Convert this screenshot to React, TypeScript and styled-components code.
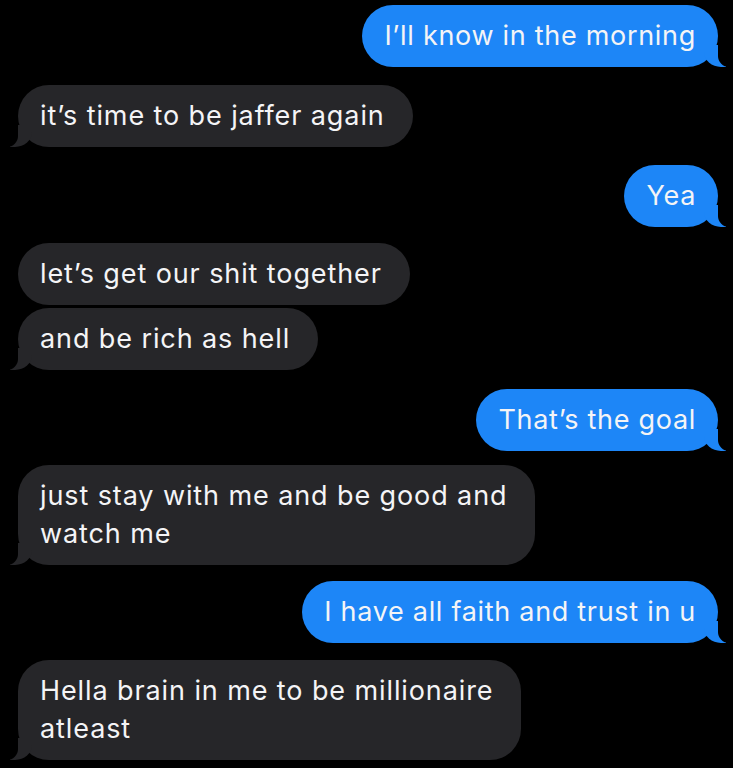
import React from 'react';
import styled, { createGlobalStyle, css } from 'styled-components';

const GlobalStyle = createGlobalStyle`
  html, body {
    margin: 0;
    padding: 0;
    background: #000;
  }
  body {
    font-family: Inter, "Liberation Sans", Arial, sans-serif;
    -webkit-font-smoothing: antialiased;
  }
`;

const Thread = styled.div`
  display: flex;
  flex-direction: column;
  padding: 5px 15px 0 18px;
  height: 768px;
  box-sizing: border-box;
  overflow: hidden;
  background: #000;
`;

type Side = 'me' | 'them';

const Bubble = styled.div<{ $side: Side; $tail: boolean; $gap: number }>`
  position: relative;
  align-self: ${({ $side }) => ($side === 'me' ? 'flex-end' : 'flex-start')};
  box-sizing: border-box;
  margin-top: ${({ $gap }) => $gap}px;
  padding: 12px ${({ $side }) => ($side === 'me' ? '22px' : '28px')} 12px 22px;
  border-radius: 31px;
  font-size: 27px;
  line-height: 38px;
  letter-spacing: ${({ $side }) => ($side === 'me' ? '0.7px' : '0.9px')};
  white-space: nowrap;
  color: #f4f4f6;
  background: ${({ $side }) => ($side === 'me' ? '#1d86f7' : '#262629')};

  ${({ $tail, $side }) =>
    $tail &&
    $side === 'me' &&
    css`
      &::before {
        content: '';
        position: absolute;
        bottom: 0;
        right: -8px;
        width: 22px;
        height: 22px;
        background: #1d86f7;
        border-bottom-left-radius: 17px 15px;
      }
      &::after {
        content: '';
        position: absolute;
        bottom: 0;
        right: -28px;
        width: 28px;
        height: 23px;
        background: #000;
        border-bottom-left-radius: 11px;
      }
    `}

  ${({ $tail, $side }) =>
    $tail &&
    $side === 'them' &&
    css`
      &::before {
        content: '';
        position: absolute;
        bottom: 0;
        left: -8px;
        width: 22px;
        height: 22px;
        background: #262629;
        border-bottom-right-radius: 17px 15px;
      }
      &::after {
        content: '';
        position: absolute;
        bottom: 0;
        left: -28px;
        width: 28px;
        height: 23px;
        background: #000;
        border-bottom-right-radius: 11px;
      }
    `}
`;

const Line = styled.span`
  position: relative;
  z-index: 1;
  display: block;
`;

const messages: { side: Side; lines: string[]; tail: boolean; gap: number }[] = [
  { side: 'me', lines: ['I’ll know in the morning'], tail: true, gap: 0 },
  { side: 'them', lines: ['it’s time to be jaffer again'], tail: true, gap: 18 },
  { side: 'me', lines: ['Yea'], tail: true, gap: 18 },
  { side: 'them', lines: ['let’s get our shit together'], tail: false, gap: 16 },
  { side: 'them', lines: ['and be rich as hell'], tail: true, gap: 3 },
  { side: 'me', lines: ['That’s the goal'], tail: true, gap: 19 },
  { side: 'them', lines: ['just stay with me and be good and', 'watch me'], tail: true, gap: 14 },
  { side: 'me', lines: ['I have all faith and trust in u'], tail: true, gap: 16 },
  { side: 'them', lines: ['Hella brain in me to be millionaire', 'atleast'], tail: true, gap: 17 },
];

const App: React.FC = () => {
  return (
    <>
      <GlobalStyle />
      <Thread>
        {messages.map((m, i) => (
          <Bubble key={i} $side={m.side} $tail={m.tail} $gap={m.gap}>
            {m.lines.map((l, j) => (
              <Line key={j}>{l}</Line>
            ))}
          </Bubble>
        ))}
      </Thread>
    </>
  );
};

export default App;
